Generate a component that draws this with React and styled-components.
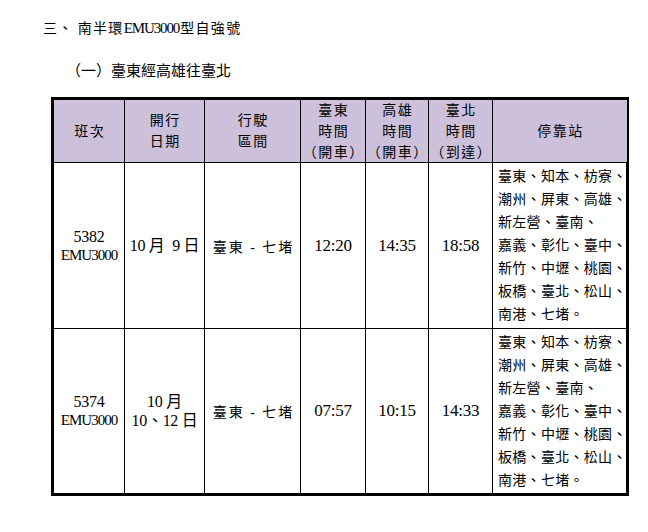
import styled, { createGlobalStyle } from 'styled-components';

const GlobalStyle = createGlobalStyle`
  body {
    margin: 0;
    background: #fff;
    color: #000;
    font-family: "Liberation Serif", "Noto Sans CJK TC", serif;
  }
`;

const trains = [
  {
    no: '5382',
    date: ['10 月\u20029 日'],
    section: '臺東 - 七堵',
    taitung: '12:20',
    kaohsiung: '14:35',
    taipei: '18:58',
  },
  {
    no: '5374',
    date: ['10 月', '10、12 日'],
    section: '臺東 - 七堵',
    taitung: '07:57',
    kaohsiung: '10:15',
    taipei: '14:33',
  },
];

const stops = [
  '臺東、知本、枋寮、',
  '潮州、屏東、高雄、',
  '新左營、臺南、',
  '嘉義、彰化、臺中、',
  '新竹、中壢、桃園、',
  '板橋、臺北、松山、',
  '南港、七堵。',
];

const headers = [
  ['班次'],
  ['開行', '日期'],
  ['行駛', '區間'],
  ['臺東', '時間', '（開車）'],
  ['高雄', '時間', '（開車）'],
  ['臺北', '時間', '（到達）'],
  ['停靠站'],
];

export default function App() {
  return (
    <Page>
      <GlobalStyle />
      <Heading>
        三、{'\u2009'}南半環<Model>EMU3000</Model>型自強號
      </Heading>
      <SubHeading>（一）臺東經高雄往臺北</SubHeading>

      <Timetable>
        {headers.map((lines, i) => (
          <HeadCell key={i} $last={i === headers.length - 1}>
            {lines.map((l) => (
              <span key={l}>{l}</span>
            ))}
          </HeadCell>
        ))}

        {trains.map((t, r) => {
          const lastRow = r === trains.length - 1;
          return [
            <Cell key={r + 'no'} $lastRow={lastRow}>
              <Num>{t.no}</Num>
              <Num $narrow>EMU3000</Num>
            </Cell>,
            <Cell key={r + 'date'} $lastRow={lastRow}>
              {t.date.map((d) => (
                <Num key={d}>{d}</Num>
              ))}
            </Cell>,
            <Cell key={r + 'sec'} $lastRow={lastRow}>
              <Section>{t.section}</Section>
            </Cell>,
            <Cell key={r + 'a'} $lastRow={lastRow}>
              <Time>{t.taitung}</Time>
            </Cell>,
            <Cell key={r + 'b'} $lastRow={lastRow}>
              <Time>{t.kaohsiung}</Time>
            </Cell>,
            <Cell key={r + 'c'} $lastRow={lastRow}>
              <Time>{t.taipei}</Time>
            </Cell>,
            <StopsCell key={r + 'stops'} $lastRow={lastRow}>
              {stops.map((s) => (
                <span key={s}>{s}</span>
              ))}
            </StopsCell>,
          ];
        })}
      </Timetable>
    </Page>
  );
}

const Page = styled.div`
  width: 648px;
  height: 532px;
  padding-top: 18px;
  box-sizing: border-box;
`;

const Heading = styled.h2`
  margin: 0 0 0 43px;
  font-size: 14px;
  font-weight: normal;
  line-height: 20px;
  letter-spacing: 1.3px;
  white-space: nowrap;
`;

const Model = styled.span`
  font-size: 15px;
  letter-spacing: -1.1px;
  margin: 0 1px 0 0;
`;

const SubHeading = styled.h3`
  margin: 22px 0 0 66px;
  font-size: 15px;
  font-weight: normal;
  line-height: 20px;
  letter-spacing: 0;
`;

const Timetable = styled.div`
  margin: 16px 0 0 51px;
  width: 578px;
  box-sizing: border-box;
  border: 3px solid #000;
  display: grid;
  grid-template-columns: 71px 80px 96px 65px 63px 64px 1fr;
  grid-template-rows: 63px 166px 164px;
`;

const HeadCell = styled.div`
  box-sizing: border-box;
  background: #ccc0da;
  border-right: ${(p) => (p.$last ? 'none' : '1px solid #000')};
  border-bottom: 1px solid #000;
  display: flex;
  flex-direction: column;
  align-items: center;
  justify-content: center;
  font-size: 14px;
  line-height: 21px;
  letter-spacing: 1.5px;
  padding-left: 1.5px;
  white-space: nowrap;
`;

const Cell = styled.div`
  box-sizing: border-box;
  border-right: 1px solid #000;
  border-bottom: ${(p) => (p.$lastRow ? 'none' : '1px solid #000')};
  display: flex;
  flex-direction: column;
  align-items: center;
  justify-content: center;
  white-space: pre;
`;

const StopsCell = styled(Cell)`
  border-right: none;
  align-items: flex-start;
  padding-left: 5px;
  font-size: 14px;
  line-height: 23px;
  letter-spacing: 0.3px;
`;

const Num = styled.span`
  font-size: ${(p) => (p.$narrow ? '15px' : '16px')};
  line-height: 19px;
  letter-spacing: ${(p) => (p.$narrow ? '-1px' : '-0.3px')};
`;

const Section = styled.span`
  font-size: 14px;
  letter-spacing: 2px;
  padding-left: 2px;
`;

const Time = styled.span`
  font-size: 17px;
  letter-spacing: -0.2px;
`;
